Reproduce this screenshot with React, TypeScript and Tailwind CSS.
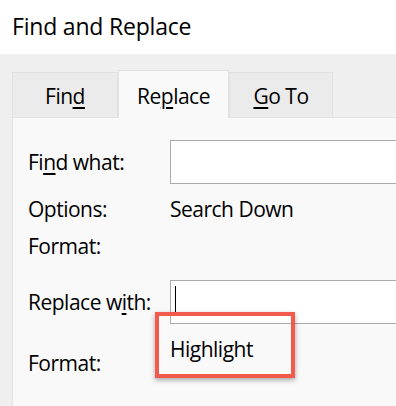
import React from "react";

export default function App() {
  return (
    <div className="w-[396px] h-[406px] overflow-hidden bg-[#efefef] font-['Open_Sans',sans-serif] text-black">
      <div className="h-[54px] bg-white pl-[12px] pt-[11px] text-[23px] leading-[31px] tracking-[-0.2px]">
        Find and Replace
      </div>
      <div className="pl-[12px] pt-[16px] flex flex-col">
        <div className="flex items-end text-[21px] leading-[30px] tracking-[-0.5px]">
          <div className="w-[106px] h-[45px] bg-[#ebebeb] border border-b-0 border-[#e1e1e1] flex justify-center items-start pt-[8px]">
            <span>
              Fin<span className="underline decoration-[2px] underline-offset-[3px]">d</span>
            </span>
          </div>
          <div className="w-[111px] h-[48px] -mb-px relative z-10 bg-[#f9f9f9] border border-b-0 border-[#e1e1e1] flex justify-center items-start pt-[10px]">
            <span>
              Re<span className="underline decoration-[2px] underline-offset-[3px]">p</span>lace
            </span>
          </div>
          <div className="w-[104px] h-[45px] bg-[#ebebeb] border border-b-0 border-[#e1e1e1] flex justify-center items-start pt-[8px]">
            <span>
              <span className="underline decoration-[2px] underline-offset-[3px]">G</span>o To
            </span>
          </div>
        </div>
        <div className="h-[300px] bg-[#f9f9f9] border-t border-l border-[#e1e1e1] pl-[15px] pt-[22px] text-[21px] leading-[30px] tracking-[-0.5px] flex flex-col">
          <div className="flex items-center h-[44px]">
            <div className="w-[142px]">
              Fi<span className="underline decoration-[2px] underline-offset-[3px]">n</span>d what:
            </div>
            <div className="flex-1 h-[44px] bg-white border border-r-0 border-[#ababab]" />
          </div>
          <div className="flex h-[30px] mt-[10px]">
            <div className="w-[142px]">Options:</div>
            <div>Search Down</div>
          </div>
          <div className="flex h-[30px] mt-[7px]">
            <div className="w-[142px]">Format:</div>
          </div>
          <div className="flex items-center h-[44px] mt-[19px]">
            <div className="w-[142px]">
              Replace w<span className="underline decoration-[2px] underline-offset-[3px]">i</span>th:
            </div>
            <div className="relative flex-1 h-[44px] bg-white border border-r-0 border-[#ababab]">
              <div className="absolute left-[4px] top-[5px] w-px h-[27px] bg-black" />
            </div>
          </div>
          <div className="flex mt-[10px]">
            <div className="w-[142px] pt-[14px]">Format:</div>
            <div className="relative">
              <div className="absolute left-[-15px] top-[-22px] w-[140px] h-[66px] border-[4px] border-[#f35a4e] shadow-[0_2px_5px_rgba(0,0,0,0.35)] z-20" />
              <div className="relative z-30">Highlight</div>
            </div>
          </div>
        </div>
      </div>
    </div>
  );
}
